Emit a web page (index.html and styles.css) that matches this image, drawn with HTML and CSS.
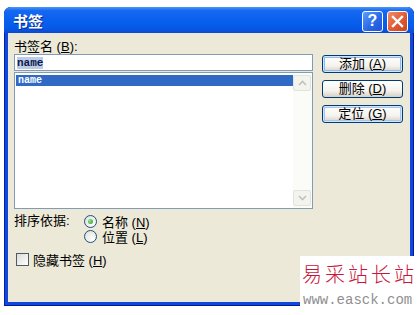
FILE: index.html
```html
<!DOCTYPE html>
<html lang="zh-CN">
<head>
    <meta charset="UTF-8">
    <title>书签</title>
    <link rel="stylesheet" href="styles.css">
</head>
<body>
    <div class="window">
        <div class="titlebar">
            <span class="title">书签</span>
            <div class="caption-buttons">
                <span class="cap-btn help">?</span>
                <span class="cap-btn close">
                    <svg width="13" height="13" viewBox="0 0 13 13">
                        <path d="M2 2 L11 11 M11 2 L2 11" stroke="#fff" stroke-width="2.4" stroke-linecap="square"/>
                    </svg>
                </span>
            </div>
        </div>
        <div class="client">
            <div class="left">
                <div class="label">书签名 (<u>B</u>):</div>
                <div class="namebox"><span class="sel-text">name</span></div>
                <div class="list">
                    <div class="items">
                        <div class="item selected">name</div>
                    </div>
                    <div class="scrollbar">
                        <div class="arrow">
                            <svg width="9" height="6" viewBox="0 0 9 6"><path d="M1 5 L4.5 1.5 L8 5" fill="none" stroke="#c2c2ba" stroke-width="1.6"/></svg>
                        </div>
                        <div class="track"></div>
                        <div class="arrow">
                            <svg width="9" height="6" viewBox="0 0 9 6"><path d="M1 1 L4.5 4.5 L8 1" fill="none" stroke="#c2c2ba" stroke-width="1.6"/></svg>
                        </div>
                    </div>
                </div>
                <div class="sort">
                    <div class="sort-label">排序依据:</div>
                    <div class="options">
                        <div class="option"><span class="radio checked"></span><span>名称 (<u>N</u>)</span></div>
                        <div class="option"><span class="radio"></span><span>位置 (<u>L</u>)</span></div>
                    </div>
                </div>
                <div class="option hide"><span class="checkbox"></span><span>隐藏书签 (<u>H</u>)</span></div>
            </div>
            <div class="right">
                <button class="btn default">添加 (<u>A</u>)</button>
                <button class="btn">删除 (<u>D</u>)</button>
                <button class="btn focus">定位 (<u>G</u>)</button>
            </div>
        </div>
    </div>
    <div class="watermark">
        <div class="wm-name">易采站长站</div>
        <div class="wm-url">www.easck.com</div>
    </div>
</body>
</html>
```

FILE: styles.css
```css
body {
    margin: 0;
    width: 420px;
    height: 315px;
    background: #fff;
    font-family: "Liberation Sans", "Noto Sans CJK SC", sans-serif;
    font-size: 13px;
    color: #000;
    position: relative;
    overflow: hidden;
}
u {
    text-decoration: underline;
    text-underline-offset: 1px;
}
.window {
    margin: 7px 0 0 4px;
    width: 410px;
    height: 299px;
    display: flex;
    flex-direction: column;
    background: #1247dc;
    border-radius: 7px 7px 0 0;
    box-shadow: inset 0 -1px 0 #001c9a, inset 1px 0 0 #0023a8, inset -1px 0 0 #001c9a;
}
.titlebar {
    height: 26px;
    display: flex;
    align-items: center;
    justify-content: space-between;
    padding: 0 6px 0 9px;
    border-radius: 7px 7px 0 0;
    background: linear-gradient(#4a97fa 0%, #1568f0 14%, #0a60ee 50%, #065ae8 80%, #0a4ad2 100%);
}
.title {
    color: #fff;
    font-family: "Noto Sans CJK SC", sans-serif;
    font-weight: bold;
    font-size: 15px;
    text-shadow: 1px 1px 0 #0a2a8a;
}
.caption-buttons {
    display: flex;
    gap: 4px;
    padding-top: 2px;
}
.cap-btn {
    width: 19px;
    height: 19px;
    border: 1px solid #fff;
    border-radius: 3px;
    display: flex;
    align-items: center;
    justify-content: center;
    color: #fff;
}
.help {
    background: linear-gradient(135deg, #5a9dfd, #2865e5 60%, #1d56d6);
    font-weight: bold;
    font-size: 16px;
}
.close {
    background: linear-gradient(135deg, #f08c68, #e15a32 55%, #c94420);
}
.client {
    flex: 1;
    margin: 0 4px 4px 4px;
    background: #ece9d8;
    display: grid;
    grid-template-columns: 299px 81px;
    column-gap: 9px;
    padding: 7px 0 0 6px;
    align-content: start;
}
.left {
    display: flex;
    flex-direction: column;
}
.label {
    height: 14px;
    line-height: 14px;
}
.namebox {
    height: 15px;
    border: 1px solid #7f9db9;
    background: #fff;
    padding-left: 2px;
    display: flex;
    align-items: center;
}
.sel-text {
    background: #bccbe6;
    color: #0c1a4c;
    font-family: "Liberation Mono", monospace;
    font-weight: bold;
    font-size: 11px;
    line-height: 12px;
}
.list {
    margin-top: 1px;
    height: 135px;
    border: 1px solid #7f9db9;
    background: #fff;
    display: flex;
}
.items {
    flex: 1;
    padding: 2px 0 0 1px;
}
.item {
    height: 11px;
    line-height: 11px;
    font-family: "Liberation Mono", monospace;
    font-weight: bold;
    font-size: 10px;
    padding-left: 2px;
}
.item.selected {
    background: #316ac5;
    color: #fff;
}
.scrollbar {
    width: 18px;
    display: flex;
    flex-direction: column;
    padding: 2px 1px 2px 0;
    background: #fbfbf8;
}
.arrow {
    height: 14px;
    border: 1px solid #e3e3dc;
    border-radius: 2px;
    background: #f4f4ef;
    display: flex;
    align-items: center;
    justify-content: center;
}
.track {
    flex: 1;
}
.sort {
    margin-top: 5px;
    display: flex;
}
.sort-label {
    width: 70px;
    height: 15px;
    line-height: 13px;
}
.option {
    height: 15px;
    display: flex;
    align-items: center;
    gap: 5px;
}
.radio {
    width: 11px;
    height: 11px;
    border: 1px solid #1c5180;
    border-radius: 50%;
    background: radial-gradient(circle at 70% 70%, #fff, #dcdcd4);
    display: flex;
    align-items: center;
    justify-content: center;
}
.radio.checked::after {
    content: "";
    width: 5px;
    height: 5px;
    border-radius: 50%;
    background: radial-gradient(circle at 35% 35%, #8fe38f, #21a121);
}
.hide {
    margin-top: 8px;
    margin-left: 2px;
    gap: 4px;
}
.checkbox {
    width: 11px;
    height: 11px;
    border: 1px solid #4f5a66;
    background: linear-gradient(135deg, #dcdcd7, #fff);
}
.right {
    display: flex;
    flex-direction: column;
    gap: 7px;
    padding-top: 15px;
}
.btn {
    height: 18px;
    padding: 0;
    border: 1px solid #003c74;
    border-radius: 3px;
    background: linear-gradient(#fff, #f4f3ee 60%, #d6d0c5);
    font-family: "Liberation Sans", "Noto Sans CJK SC", sans-serif;
    font-size: 13px;
    line-height: 16px;
    color: #000;
}
.btn.default {
    box-shadow: inset 0 0 0 1px #cee7ff, inset 0 0 0 2px #98b8ea;
}
.btn.focus {
    box-shadow: inset 0 0 0 1px #cee7ff, inset 0 0 0 2px #a9c4ee;
}
.watermark {
    position: absolute;
    left: 300px;
    top: 256px;
    width: 120px;
    height: 59px;
    background: #fff;
}
.wm-name {
    margin: 6px 0 0 2px;
    font-family: "Noto Sans CJK SC", serif;
    font-weight: 300;
    font-size: 20px;
    line-height: 24px;
    letter-spacing: 3px;
    color: #c8163a;
}
.wm-url {
    margin: 7px 0 0 3px;
    font-family: "Liberation Mono", monospace;
    font-size: 14px;
    line-height: 14px;
    color: #8f8f8f;
}
```
